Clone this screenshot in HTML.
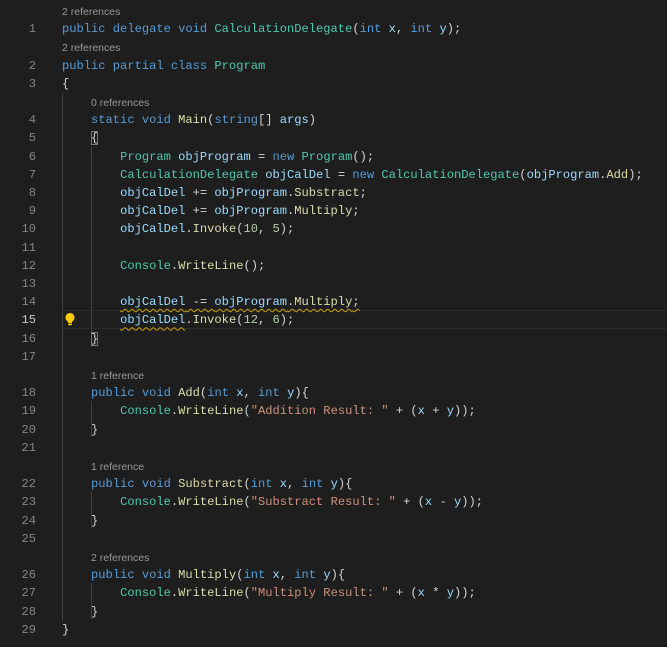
<!DOCTYPE html>
<html><head><style>
body{margin:0;background:#1e1e1e;width:667px;height:646px;overflow:hidden;position:relative}
#w{position:absolute;left:0;top:1px;width:667px;height:646px}
.r{position:absolute;left:0;height:18.2px;line-height:18.2px;white-space:pre;font-family:"Liberation Mono",monospace;font-size:12.1px;color:#d4d4d4}
.n{position:absolute;left:0;width:36px;text-align:right;color:#858585}
.c{position:absolute;left:62px}
.cl{position:absolute;font-family:"Liberation Sans",sans-serif;font-size:10.5px;color:#999;white-space:pre;height:18.2px;line-height:20px}
.k{color:#569cd6}.t{color:#4ec9b0}.f{color:#dcdcaa}.v{color:#9cdcfe}.s{color:#ce9178}.m{color:#b5cea8}
.g{position:absolute;width:1px;background:#404040}
.w{text-decoration:underline wavy #c8a000;text-decoration-thickness:1px;text-underline-offset:3px}
.b{outline:1px solid #777;outline-offset:-1px}
</style></head><body><div id="w">
<div style="position:absolute;left:62px;right:0;top:309.4px;height:16.2px;border-top:1px solid #2c2c2c;border-bottom:1px solid #2c2c2c"></div>
<div class="g" style="left:62px;top:92px;height:528px"></div>
<div class="g" style="left:91px;top:146px;height:200px"></div>
<div class="g" style="left:91px;top:400px;height:36px"></div>
<div class="g" style="left:91px;top:491px;height:36px"></div>
<div class="g" style="left:91px;top:582px;height:36px"></div>
<div class="cl" style="left:62px;top:1px">2 references</div>
<div class="r" style="top:19.2px"><span class="n">1</span><span class="c"><span class="k">public delegate void</span> <span class="t">CalculationDelegate</span>(<span class="k">int</span> <span class="v">x</span>, <span class="k">int</span> <span class="v">y</span>);</span></div>
<div class="cl" style="left:62px;top:37.4px">2 references</div>
<div class="r" style="top:55.6px"><span class="n">2</span><span class="c"><span class="k">public partial class</span> <span class="t">Program</span></span></div>
<div class="r" style="top:73.8px"><span class="n">3</span><span class="c">{</span></div>
<div class="cl" style="left:91px;top:92px">0 references</div>
<div class="r" style="top:110.2px"><span class="n">4</span><span class="c">    <span class="k">static void</span> <span class="f">Main</span>(<span class="k">string</span>[] <span class="v">args</span>)</span></div>
<div class="r" style="top:128.4px"><span class="n">5</span><span class="c">    <span class="b">{</span></span></div>
<div class="r" style="top:146.6px"><span class="n">6</span><span class="c">        <span class="t">Program</span> <span class="v">objProgram</span> = <span class="k">new</span> <span class="t">Program</span>();</span></div>
<div class="r" style="top:164.8px"><span class="n">7</span><span class="c">        <span class="t">CalculationDelegate</span> <span class="v">objCalDel</span> = <span class="k">new</span> <span class="t">CalculationDelegate</span>(<span class="v">objProgram</span>.<span class="f">Add</span>);</span></div>
<div class="r" style="top:183px"><span class="n">8</span><span class="c">        <span class="v">objCalDel</span> += <span class="v">objProgram</span>.<span class="f">Substract</span>;</span></div>
<div class="r" style="top:201.2px"><span class="n">9</span><span class="c">        <span class="v">objCalDel</span> += <span class="v">objProgram</span>.<span class="f">Multiply</span>;</span></div>
<div class="r" style="top:219.4px"><span class="n">10</span><span class="c">        <span class="v">objCalDel</span>.<span class="f">Invoke</span>(<span class="m">10</span>, <span class="m">5</span>);</span></div>
<div class="r" style="top:237.6px"><span class="n">11</span></div>
<div class="r" style="top:255.8px"><span class="n">12</span><span class="c">        <span class="t">Console</span>.<span class="f">WriteLine</span>();</span></div>
<div class="r" style="top:274px"><span class="n">13</span></div>
<div class="r" style="top:292.2px"><span class="n">14</span><span class="c">        <span class="w"><span class="v">objCalDel</span> -= <span class="v">objProgram</span>.<span class="f">Multiply</span>;</span></span></div>
<div class="r" style="top:310.4px"><span class="n" style="color:#c6c6c6">15</span><span class="c">        <span class="w"><span class="v">objCalDel</span></span>.<span class="f">Invoke</span>(<span class="m">12</span>, <span class="m">6</span>);</span></div>
<svg style="position:absolute;left:64px;top:311px" width="12" height="15" viewBox="0 0 12 15"><path d="M6 1a4.5 4.5 0 0 0-2.7 8.1c.5.5.8 1 .8 1.9h3.8c0-.9.3-1.4.8-1.9A4.5 4.5 0 0 0 6 1z" fill="#ffcc00"/><rect x="4.1" y="11.6" width="3.8" height="1.6" fill="#ffcc00"/></svg>
<div class="r" style="top:328.6px"><span class="n">16</span><span class="c">    <span class="b">}</span></span></div>
<div class="r" style="top:346.8px"><span class="n">17</span></div>
<div class="cl" style="left:91px;top:365px">1 reference</div>
<div class="r" style="top:383.2px"><span class="n">18</span><span class="c">    <span class="k">public void</span> <span class="f">Add</span>(<span class="k">int</span> <span class="v">x</span>, <span class="k">int</span> <span class="v">y</span>){</span></div>
<div class="r" style="top:401.4px"><span class="n">19</span><span class="c">        <span class="t">Console</span>.<span class="f">WriteLine</span>(<span class="s">"Addition Result: "</span> + (<span class="v">x</span> + <span class="v">y</span>));</span></div>
<div class="r" style="top:419.6px"><span class="n">20</span><span class="c">    }</span></div>
<div class="r" style="top:437.8px"><span class="n">21</span></div>
<div class="cl" style="left:91px;top:456px">1 reference</div>
<div class="r" style="top:474.2px"><span class="n">22</span><span class="c">    <span class="k">public void</span> <span class="f">Substract</span>(<span class="k">int</span> <span class="v">x</span>, <span class="k">int</span> <span class="v">y</span>){</span></div>
<div class="r" style="top:492.4px"><span class="n">23</span><span class="c">        <span class="t">Console</span>.<span class="f">WriteLine</span>(<span class="s">"Substract Result: "</span> + (<span class="v">x</span> - <span class="v">y</span>));</span></div>
<div class="r" style="top:510.6px"><span class="n">24</span><span class="c">    }</span></div>
<div class="r" style="top:528.8px"><span class="n">25</span></div>
<div class="cl" style="left:91px;top:547px">2 references</div>
<div class="r" style="top:565.2px"><span class="n">26</span><span class="c">    <span class="k">public void</span> <span class="f">Multiply</span>(<span class="k">int</span> <span class="v">x</span>, <span class="k">int</span> <span class="v">y</span>){</span></div>
<div class="r" style="top:583.4px"><span class="n">27</span><span class="c">        <span class="t">Console</span>.<span class="f">WriteLine</span>(<span class="s">"Multiply Result: "</span> + (<span class="v">x</span> * <span class="v">y</span>));</span></div>
<div class="r" style="top:601.6px"><span class="n">28</span><span class="c">    }</span></div>
<div class="r" style="top:619.8px"><span class="n">29</span><span class="c">}</span></div>
</div></body></html>
